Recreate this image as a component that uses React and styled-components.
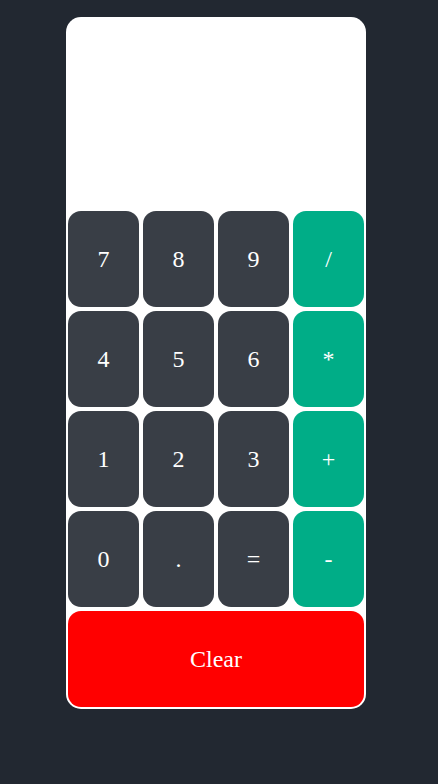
import React from "react";
import styled, { createGlobalStyle } from "styled-components";

const Global = createGlobalStyle`
  html, body { margin: 0; padding: 0; background: #222831; }
  body { font-family: "Liberation Serif", "Times New Roman", serif; }
`;

const Page = styled.div`
  min-height: 784px;
  padding: 17px 0 0 66px;
  box-sizing: border-box;
`;

const Calculator = styled.div`
  width: 300px;
  box-sizing: border-box;
  background: #ffffff;
  border-radius: 15px;
  padding: 0 2px 2px 2px;
  overflow: hidden;
`;

const Display = styled.div`
  height: 194px;
  color: #222831;
  font-size: 32px;
  display: flex;
  align-items: flex-end;
  justify-content: flex-end;
  padding: 0 12px 8px;
  box-sizing: border-box;
`;

const Keys = styled.div`
  display: grid;
  grid-template-columns: repeat(4, 71px);
  grid-auto-rows: 96px;
  gap: 4px;
`;

const Key = styled.button`
  border: none;
  border-radius: 13px;
  background: ${(p) => (p.$variant === "op" ? "#00ad87" : p.$variant === "clear" ? "#ff0000" : "#393e46")};
  color: #ffffff;
  font-family: "Liberation Serif", "Times New Roman", serif;
  font-size: 24px;
  padding: 0;
  cursor: pointer;
  grid-column: ${(p) => (p.$wide ? "1 / -1" : "auto")};
`;

const rows = [
  ["7", "8", "9", "/"],
  ["4", "5", "6", "*"],
  ["1", "2", "3", "+"],
  ["0", ".", "=", "-"],
];

export default function App() {
  return (
    <>
      <Global />
      <Page>
        <Calculator>
          <Display />
          <Keys>
            {rows.flat().map((k, i) => (
              <Key key={k} $variant={i % 4 === 3 ? "op" : "num"}>
                {k}
              </Key>
            ))}
            <Key $variant="clear" $wide>
              Clear
            </Key>
          </Keys>
        </Calculator>
      </Page>
    </>
  );
}
